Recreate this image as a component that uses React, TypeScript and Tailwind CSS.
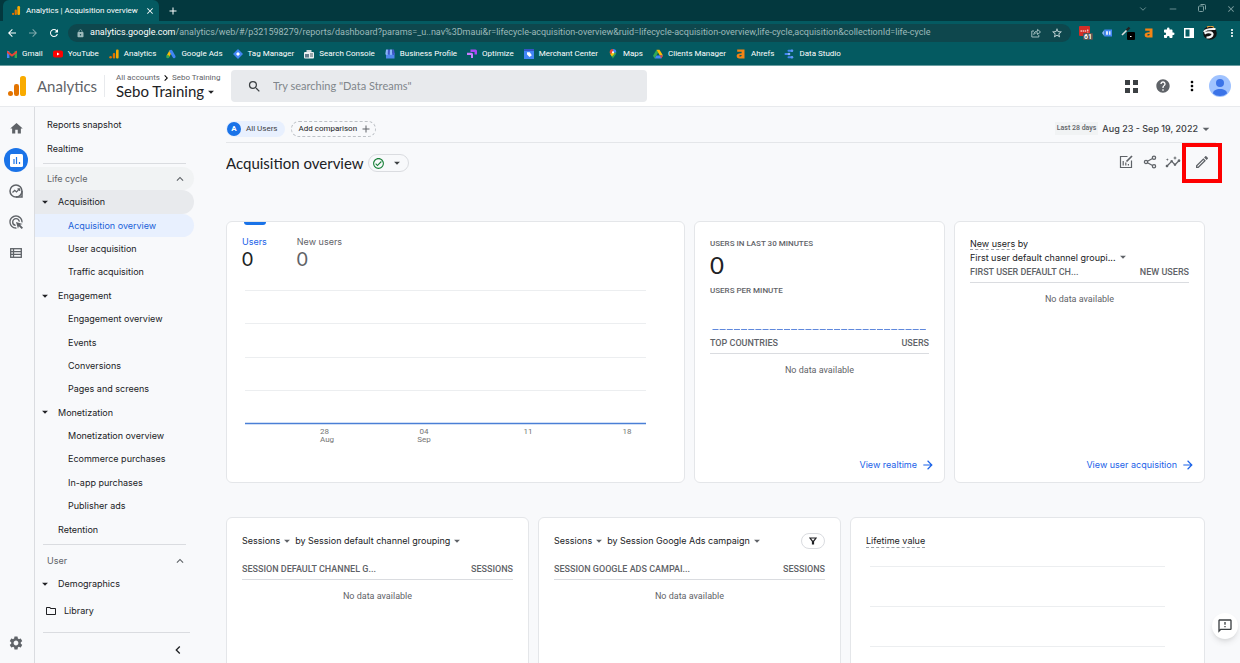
import type { ReactNode } from 'react';
import {
  MdAdsClick,
  MdArrowBack,
  MdArrowDropDown,
  MdArrowForward,
  MdAdd,
  MdChevronLeft,
  MdChevronRight,
  MdClose,
  MdExpandLess,
  MdExtension,
  MdHelp,
  MdHome,
  MdInsights,
  MdLock,
  MdMoreVert,
  MdOutlineCheckCircle,
  MdOutlineFeedback,
  MdOutlineFolder,
  MdOutlineEdit,
  MdRefresh,
  MdSearch,
  MdSettings,
  MdStarBorder,
} from 'react-icons/md';
import { FiChevronDown, FiMinus } from 'react-icons/fi';
import { twMerge } from 'tailwind-merge';
import clsx from 'clsx';
import type { ClassValue } from 'clsx';

const cn = (...inputs: ClassValue[]) => twMerge(clsx(inputs));

const AnalyticsLogo = ({ className }: { className?: string }) => (
  <svg viewBox="0 0 18 20" className={className} aria-hidden="true">
    <rect x="12" y="0" width="6" height="20" rx="2.6" fill="#f9ab00" />
    <rect x="6" y="8" width="5" height="12" rx="2.2" fill="#e37400" />
    <circle cx="2.5" cy="17.5" r="2.5" fill="#e37400" />
  </svg>
);

const AhrefsMark = () => (
  <path
    d="M1.2.5h7.3v9H3A2.4 2.4 0 01.6 7.1c0-1.9 1.3-2.9 5-2.9V2.8H1.2zM5.6 6C3.9 6 3.2 6.2 3.2 6.9c0 .9 2.4.8 2.4-.5z"
    fill="#f58414"
    fillRule="evenodd"
  />
);

const bookmarks: { label: string; icon: ReactNode }[] = [
  {
    label: 'Gmail',
    icon: (
      <>
        <path d="M0 2h2.4v7H0z" fill="#4285f4" />
        <path d="M7.6 2H10v7H7.6z" fill="#34a853" />
        <path d="M0 1.5l5 3.8 5-3.8v2.6L5 7.8 0 4.1z" fill="#ea4335" />
      </>
    ),
  },
  {
    label: 'YouTube',
    icon: (
      <>
        <rect y="1.5" width="10" height="7" rx="1.8" fill="#f00" />
        <path d="M4 3.5v3L6.6 5z" fill="#fff" />
      </>
    ),
  },
  {
    label: 'Analytics',
    icon: (
      <>
        <rect x="7" y="0.5" width="2.6" height="9" rx="1" fill="#f9ab00" />
        <rect x="3.8" y="4" width="2.4" height="5.5" rx="1" fill="#e37400" />
        <circle cx="1.6" cy="8.2" r="1.3" fill="#e37400" />
      </>
    ),
  },
  {
    label: 'Google Ads',
    icon: (
      <>
        <path d="M4.8 2L1.8 7.5" stroke="#fbbc04" strokeWidth="2.8" />
        <path d="M5 2.2l3 5.4" stroke="#4285f4" strokeWidth="3" strokeLinecap="round" />
        <circle cx="1.8" cy="7.7" r="1.6" fill="#34a853" />
      </>
    ),
  },
  {
    label: 'Tag Manager',
    icon: (
      <>
        <path d="M5 0l5 5-5 5-5-5z" fill="#4285f4" />
        <path d="M5 3l2 2-2 2-2-2z" fill="#fff" />
      </>
    ),
  },
  {
    label: 'Search Console',
    icon: (
      <>
        <path d="M2.5 1h5v2h-5z" fill="#cfd8dc" />
        <rect y="3" width="10" height="6.5" rx="1" fill="#eceff1" />
        <path d="M1 5h4v3.5H1z" fill="#607d8b" />
        <path d="M6 5h3M6 7h3" stroke="#455a64" />
      </>
    ),
  },
  {
    label: 'Business Profile',
    icon: (
      <>
        <path d="M1 4h8.5v5.5H1z" fill="#4f86ec" />
        <path d="M1 .5h2v4.2a1.3 1.3 0 01-2.6 0z" fill="#8ab4f8" />
        <path d="M3 .5h2v4.2a1.2 1.2 0 01-2.3 0z" fill="#4257c9" />
        <path d="M5 .5h2.2v4.2a1.2 1.2 0 01-2.4 0z" fill="#8ab4f8" />
        <path d="M7.2.5H9l.8 4.2a1.3 1.3 0 01-2.6 0z" fill="#4257c9" />
      </>
    ),
  },
  {
    label: 'Optimize',
    icon: (
      <>
        <path d="M3.5.5h5A1.5 1.5 0 0110 2v3.5H7.5V3h-4z" fill="#ab47f5" />
        <path d="M0 3.8h4.5A1.5 1.5 0 016 5.3V9H4V6H0z" fill="#c77dff" />
      </>
    ),
  },
  {
    label: 'Merchant Center',
    icon: (
      <>
        <path d="M0 0h10v10H0z" fill="#4285f4" />
        <path d="M0 0h10v2H0z" fill="#3454c5" />
        <path d="M3 3.2h2.8l2 3L5.5 8 3 5.5z" fill="#fff" />
      </>
    ),
  },
  {
    label: 'Maps',
    icon: (
      <>
        <path d="M5 10C4.5 7.5 1.7 6.3 1.7 3.3L5 3.5l3.3-.2C8.3 6.3 5.5 7.5 5 10z" fill="#34a853" />
        <path d="M1.7 3.3A3.3 3.3 0 015 0v3.4L2.4 5.2a4 4 0 01-.7-1.9z" fill="#ea4335" />
        <path d="M5 0a3.3 3.3 0 013.3 3.3L5 4z" fill="#4285f4" />
        <path d="M2.4 5.2L5 3l1.5 1.8-2.6 2.7z" fill="#fbbc04" />
        <circle cx="5" cy="3.3" r="1.1" fill="#fff" />
      </>
    ),
  },
  {
    label: 'Clients Manager',
    icon: (
      <>
        <path d="M3.5.8L0 6.8 1.7 9.4 5.2 3.5z" fill="#34a853" />
        <path d="M3.5.8h3L10 6.6H6.8z" fill="#fbbc04" />
        <path d="M3.4 6.6H10L8.3 9.4H1.7z" fill="#4285f4" />
        <path d="M6.8 6.6H10L8.3 9.4z" fill="#ea4335" />
      </>
    ),
  },
  { label: 'Ahrefs', icon: <AhrefsMark /> },
  {
    label: 'Data Studio',
    icon: (
      <>
        <path d="M4.5 1.8H8M1.5 5H5M4.5 8.2H8" stroke="#4285f4" strokeWidth="2" strokeLinecap="round" />
        <circle cx="8" cy="1.8" r="1.3" fill="#5e97f6" />
        <circle cx="5" cy="5" r="1.3" fill="#8ab4f8" />
        <circle cx="8" cy="8.2" r="1.3" fill="#5e97f6" />
      </>
    ),
  },
];

const BrowserBar = () => (
  <div className="flex-shrink-0 border-b border-[#6a9da1] bg-[#045a61] font-['Roboto',sans-serif] text-white">
    <div className="flex h-[21px] items-stretch bg-[#03383e] pl-[3px]">
      <div className="flex w-[156px] items-center rounded-t-md bg-[#045a61] pr-1 pl-2">
        <AnalyticsLogo className="h-[9px] w-[10px]" />
        <span className="ml-[5px] flex-1 text-[8px] whitespace-nowrap">Analytics | Acquisition overview</span>
        <button aria-label="Close tab">
          <MdClose className="size-[10px]" />
        </button>
      </div>
      <button aria-label="New tab" className="ml-2">
        <MdAdd className="size-3" />
      </button>
      <div className="ml-auto flex items-start gap-5 pt-1 pr-1 text-[#7d9fa1]">
        <button aria-label="Search tabs"><FiChevronDown className="size-[10px]" /></button>
        <button aria-label="Minimize"><FiMinus className="size-[10px]" /></button>
        <button aria-label="Restore">
          <svg viewBox="0 0 8 8" className="size-2" fill="none" stroke="currentColor">
            <rect x="0.5" y="2" width="5" height="5.5" rx="1" />
            <path d="M2.5.5h4a1 1 0 011 1v4" />
          </svg>
        </button>
        <button aria-label="Close window"><MdClose className="size-[10px]" /></button>
      </div>
    </div>

    <div className="flex h-6 items-center pl-[6px]">
      <button aria-label="Back"><MdArrowBack className="size-3" /></button>
      <button aria-label="Forward" className="ml-[9px] text-[#7fa8ab]"><MdArrowForward className="size-3" /></button>
      <button aria-label="Reload" className="ml-[9px]"><MdRefresh className="size-3" /></button>
      <div className="ml-2 flex h-[18px] flex-1 items-center rounded-full bg-[#0e474d] pr-2 pl-2 text-[9px] text-[#9dbabb]">
        <MdLock className="size-[9px]" />
        <label htmlFor="address" className="ml-[5px] text-white">analytics.google.com</label>
        <input
          id="address"
          className="min-w-0 flex-1 bg-transparent outline-none"
          defaultValue="/analytics/web/#/p321598279/reports/dashboard?params=_u..nav%3Dmaui&r=lifecycle-acquisition-overview&ruid=lifecycle-acquisition-overview,life-cycle,acquisition&collectionId=life-cycle"
        />
        <button aria-label="Share this page">
          <svg viewBox="0 0 10 10" className="size-[10px]" fill="none" stroke="currentColor">
            <path d="M3 3H.8v6h7V7" />
            <path d="M2.8 6.5c.2-2.2 1.5-3.3 3.7-3.3V1.4l3 2.6-3 2.5V4.8c-1.6 0-2.7.4-3.7 1.7z" />
          </svg>
        </button>
        <button aria-label="Bookmark" className="ml-[10px] text-[#cfdedf]"><MdStarBorder className="size-3" /></button>
      </div>
      <div className="ml-2 flex items-center gap-[9px] pr-[2px]">
        <button aria-label="Password manager">
          <svg viewBox="0 0 14 14" className="size-[14px]">
            <rect width="11" height="10" rx="1" fill="#d32d27" />
            <path d="M1.5 5h6M8.8 3.5v3" stroke="#fff" strokeDasharray="1.5 .6" />
            <rect x="4" y="7" width="10" height="7" rx="1" fill="#555" />
            <text x="5" y="13" fontSize="7" fontWeight="700" fill="#fff">61</text>
          </svg>
        </button>
        <button aria-label="Tag helper">
          <svg viewBox="0 0 10 10" className="size-[10px]">
            <path d="M0 5l2.5-3.5v7z" fill="#8ab4f8" />
            <path d="M2.5 1.5H10v7H2.5z" fill="#4285f4" />
            <path d="M4 3.3h2v3.4H4zM7 3.3h1.5v3.4H7z" fill="#dce8fd" />
          </svg>
        </button>
        <button aria-label="Color picker">
          <svg viewBox="0 0 14 14" className="size-[14px]">
            <path d="M1 9l5-5" stroke="#ddd" strokeWidth="1.6" />
            <path d="M5.5 4.5l3-3" stroke="#222" strokeWidth="2.4" />
            <rect x="6" y="6" width="8" height="8" rx="1" fill="#000" />
            <path d="M9 10.5h1.5" stroke="#fff" />
          </svg>
        </button>
        <button aria-label="Ahrefs toolbar">
          <svg viewBox="0 0 10 10" className="size-[10px]"><AhrefsMark /></svg>
        </button>
        <button aria-label="Extensions"><MdExtension className="size-3" /></button>
        <button aria-label="Side panel">
          <svg viewBox="0 0 10 10" className="size-[10px]">
            <path d="M0 0h10v10H0zM1.5 1.5v7h4v-7z" fill="#fff" fillRule="evenodd" />
          </svg>
        </button>
        <button aria-label="Profile">
          <svg viewBox="0 0 14 14" className="size-[14px]" fill="none">
            <circle cx="7" cy="7" r="6.8" fill="#111" />
            <path d="M1 6C2 3.5 5 2.5 12.5 3" stroke="#f5f5f5" strokeWidth="2" />
            <path d="M1.5 7.5C5 5.5 10 6 9.5 8.5S6 11.5 3.5 11.5" stroke="#f5f5f5" strokeWidth="2.2" />
            <path d="M4 1.2C6 0 9 0 11 1.5" stroke="#e8a33d" strokeWidth="1.2" />
          </svg>
        </button>
        <button aria-label="Browser menu"><MdMoreVert className="size-3" /></button>
      </div>
    </div>

    <nav className="flex h-5 items-center gap-[10px] overflow-hidden pb-[3px] pl-[7px] text-[8px] whitespace-nowrap">
      {bookmarks.map((b) => (
        <a key={b.label} href="#" className="flex items-center gap-[5px]">
          <svg viewBox="0 0 10 10" className="size-[10px]" fill="none" aria-hidden="true">{b.icon}</svg>
          {b.label}
        </a>
      ))}
    </nav>
  </div>
);

const AppHeader = () => (
  <header className="flex h-[41px] flex-shrink-0 items-center border-b border-[#e8eaed] bg-white pr-[9px] pl-2 text-[#202124]">
    <AnalyticsLogo className="h-5 w-[18px]" />
    <span className="ml-[11px] w-[57px] font-['Lato',sans-serif] text-[15px] text-[#5f6368]">Analytics</span>
    <div className="mr-[11px] ml-[10px] h-[22px] w-px bg-[#e8eaed]" />
    <div className="w-[115px] whitespace-nowrap">
      <div className="flex h-[11px] items-center font-['Roboto',sans-serif] text-[8px] text-[#5f6368]">
        All accounts <MdChevronRight className="size-3 text-black" /> Sebo Training
      </div>
      <button className="flex h-[17px] items-center font-['Lato',sans-serif] text-[15px]">
        Sebo Training <MdArrowDropDown className="size-[14px]" />
      </button>
    </div>
    <label className="flex h-8 w-full max-w-[416px] items-center rounded bg-[#e8eaed] pl-4">
      <MdSearch className="size-[15px] text-[#3c4043]" />
      <input
        type="search"
        aria-label="Search"
        placeholder={'Try searching "Data Streams"'}
        className="ml-[11px] flex-1 bg-transparent font-['Lato',sans-serif] text-[11px] outline-none placeholder:text-[#80868b]"
      />
    </label>
    <div className="ml-auto flex items-center text-[#5f6368]">
      <button aria-label="Apps" className="grid grid-cols-2 gap-[3px]">
        {[0, 1, 2, 3].map((i) => (
          <span key={i} className="size-[5px] bg-[#3c4043]" />
        ))}
      </button>
      <button aria-label="Help" className="ml-[17px]"><MdHelp className="size-4" /></button>
      <button aria-label="More" className="ml-[13px] text-black"><MdMoreVert className="size-4" /></button>
      <button aria-label="Account" className="ml-[9px]">
        <svg viewBox="0 0 22 22" className="size-[22px]">
          <circle cx="11" cy="11" r="11" fill="#a0c3ff" />
          <circle cx="11" cy="8" r="4" fill="#3b73e8" />
          <path d="M4 18.5c0-3 3-4.5 7-4.5s7 1.5 7 4.5a11 11 0 01-14 0z" fill="#3b73e8" />
        </svg>
      </button>
    </div>
  </header>
);

const Rail = () => (
  <nav aria-label="Sections" className="flex w-[35px] flex-shrink-0 flex-col items-center border-r border-[#dadce0] pt-[14px] pr-[2px] pb-3 text-[#5f6368]">
    <a href="#" aria-label="Home"><MdHome className="size-[15px]" /></a>
    <a href="#" aria-label="Reports" className="mt-3 flex size-6 items-center justify-center rounded-full bg-[#1a73e8]">
      <svg viewBox="0 0 13 13" className="size-[13px]">
        <rect width="13" height="13" rx="1.5" fill="#fff" />
        <path d="M4 5v5M6.5 3v7M9.5 8v2" stroke="#1a73e8" strokeWidth="1.2" />
      </svg>
    </a>
    <a href="#" aria-label="Explore" className="mt-3">
      <svg viewBox="0 0 14 14" className="size-[14px]" fill="none" stroke="currentColor" strokeWidth="1.5">
        <path d="M13 7v6H7" />
        <circle cx="7" cy="7" r="6" />
        <path d="M3.5 8.5l2.2-2.2 1.8 1.6 3-3M8.5 4.8h2.2V7" strokeWidth="1.2" />
      </svg>
    </a>
    <a href="#" aria-label="Advertising" className="mt-4"><MdAdsClick className="size-4" /></a>
    <a href="#" aria-label="Configure" className="mt-[18px]">
      <svg viewBox="0 0 12 10" className="h-[10px] w-3" fill="none" stroke="currentColor" strokeWidth="1.3">
        <rect x="0.7" y="0.7" width="10.6" height="8.6" />
        <path d="M.7 3.6h10.6M.7 6.4h10.6M3.5.7v8.6" />
      </svg>
    </a>
    <a href="#" aria-label="Admin" className="mt-auto"><MdSettings className="size-4" /></a>
  </nav>
);

interface NavItem {
  label: string;
  level: 1 | 2;
  hasChildren?: boolean;
  isOpen?: boolean;
  isActive?: boolean;
}

const lifeCycle: NavItem[] = [
  { label: 'Acquisition', level: 1, hasChildren: true, isOpen: true },
  { label: 'Acquisition overview', level: 2, isActive: true },
  { label: 'User acquisition', level: 2 },
  { label: 'Traffic acquisition', level: 2 },
  { label: 'Engagement', level: 1, hasChildren: true },
  { label: 'Engagement overview', level: 2 },
  { label: 'Events', level: 2 },
  { label: 'Conversions', level: 2 },
  { label: 'Pages and screens', level: 2 },
  { label: 'Monetization', level: 1, hasChildren: true },
  { label: 'Monetization overview', level: 2 },
  { label: 'Ecommerce purchases', level: 2 },
  { label: 'In-app purchases', level: 2 },
  { label: 'Publisher ads', level: 2 },
  { label: 'Retention', level: 1 },
];

const NavRow = ({ item }: { item: NavItem }) => (
  <a
    href="#"
    className={cn(
      'flex min-h-[22px] flex-1 items-center rounded-r-full',
      item.level === 1 ? 'pl-[3px]' : 'pl-[33px]',
      item.isOpen && 'bg-[#e8eaed]',
      item.isActive && 'bg-[#e8f0fe] text-[#1a5fd8]'
    )}
  >
    {item.level === 1 && (
      <span className="mr-[6px] w-[14px]">{item.hasChildren && <MdArrowDropDown className="size-[14px]" />}</span>
    )}
    {item.label}
  </a>
);

const SectionButton = ({ label, shaded }: { label: string; shaded?: boolean }) => (
  <button
    className={cn(
      'flex min-h-[22px] flex-1 items-center justify-between rounded-r-full pr-[7px] pl-3 text-[#5f6368]',
      shaded && 'bg-[#f1f3f4]'
    )}
  >
    {label}
    <MdExpandLess className="size-[14px]" />
  </button>
);

const Sidebar = () => (
  <nav aria-label="Reports" className="flex w-[159px] flex-shrink-0 flex-col pt-[6px] text-[9px] text-[#202124]">
    <a href="#" className="flex h-6 items-center pl-3">Reports snapshot</a>
    <a href="#" className="flex h-6 items-center pl-3">Realtime</a>
    <hr className="mt-[2px] mr-2 ml-2 border-[#dadce0]" />
    <div className="mt-[3px] flex flex-1 flex-col">
      <SectionButton label="Life cycle" shaded />
      {lifeCycle.map((item) => (
        <NavRow key={item.label} item={item} />
      ))}
    </div>
    <hr className="mt-[3px] mr-2 ml-2 border-[#dadce0]" />
    <div className="mt-1 flex h-[46px] flex-col">
      <SectionButton label="User" />
      <NavRow item={{ label: 'Demographics', level: 1, hasChildren: true }} />
    </div>
    <a href="#" className="mt-1 flex h-6 items-center gap-[7px] pl-[10px]">
      <MdOutlineFolder className="size-3" />
      Library
    </a>
    <hr className="mt-[9px] mr-1 ml-2 border-[#dadce0]" />
    <button aria-label="Collapse" className="flex h-[30px] items-center justify-end pr-2 pt-1">
      <MdChevronLeft className="size-4" />
    </button>
  </nav>
);

const Card = ({ children, className }: { children: ReactNode; className?: string }) => (
  <section className={cn('flex flex-col rounded-md border border-[#e4e6e9] bg-white px-[15px]', className)}>
    {children}
  </section>
);

const EmptyTable = ({ dimension, metric }: { dimension: string; metric: string }) => (
  <table className="w-full font-['Roboto',sans-serif] text-[9px] text-[#5f6368]">
    <thead>
      <tr className="h-[18px] border-b border-[#dadce0]">
        <th className="text-left align-middle font-medium">{dimension}</th>
        <th className="text-right align-middle font-medium">{metric}</th>
      </tr>
    </thead>
    <tbody>
      <tr className="h-[34px]">
        <td colSpan={2} className="text-center">No data available</td>
      </tr>
    </tbody>
  </table>
);

const PickerButton = ({ label }: { label: string }) => (
  <button className="flex items-center">
    {label}
    <MdArrowDropDown className="size-[14px] text-[#5f6368]" />
  </button>
);

const ViewLink = ({ label }: { label: string }) => (
  <a href="#" className="-mr-[6px] mt-auto mb-[10px] flex items-center justify-end gap-1 text-[9px] text-[#1a62e8]">
    {label}
    <MdArrowForward className="size-[14px]" />
  </a>
);

const UsersChart = () => (
  <div className="mt-5 mr-[23px]">
    <svg viewBox="0 0 404 156" className="w-full font-['Roboto',sans-serif]" role="img" aria-label="Users per day">
      {[0, 33, 67, 100].map((y) => (
        <path key={y} d={`M3 ${y + 0.5}h401`} stroke="#eceef0" />
      ))}
      <path d="M3 133.5h401" stroke="#4a7fd6" strokeWidth="1.5" />
      <g fontSize="8" fill="#757575">
        <text x="78" y="144">28</text>
        <text x="78" y="152">Aug</text>
        <text x="182" y="144" textAnchor="middle">04</text>
        <text x="182" y="152" textAnchor="middle">Sep</text>
        <text x="286" y="144" textAnchor="middle">11</text>
        <text x="385" y="144" textAnchor="middle">18</text>
      </g>
    </svg>
  </div>
);

const Toolbar = () => (
  <div className="flex items-center text-[#5f6368]">
    <div className="flex items-center pb-[3px]">
      <button aria-label="Customize chart">
        <svg viewBox="0 0 14 14" className="size-[14px]" fill="none" stroke="currentColor" strokeWidth="1.2">
          <path d="M8.5 1.5h-7v11h11v-7" />
          <path d="M4.2 6v4.5M6.8 7.5v3M9.4 9v1.5" />
          <path d="M7.5 6.5L13 1" strokeWidth="1.7" />
        </svg>
      </button>
      <button aria-label="Share report" className="ml-[10px]">
        <svg viewBox="0 0 14 14" className="size-[14px]" fill="none" stroke="currentColor" strokeWidth="1.3">
          <circle cx="11" cy="2.7" r="1.6" />
          <circle cx="3" cy="7" r="1.6" />
          <circle cx="11" cy="11.3" r="1.6" />
          <path d="M4.5 6.2l5-2.7M4.5 7.8l5 2.7" />
        </svg>
      </button>
      <button aria-label="Insights" className="ml-2"><MdInsights className="size-4" /></button>
    </div>
    <button aria-label="Customize report" className="ml-px flex h-10 w-10 items-center justify-center border-4 border-[#fe0000] pb-[3px]">
      <MdOutlineEdit className="size-4" />
    </button>
  </div>
);

const Report = () => (
  <main className="ml-8 min-w-0 flex-1 overflow-hidden text-[#202124]">
    <div className="mr-6 flex h-9 items-center border-b border-[#e4e6e9] pt-2 font-['Roboto',sans-serif] text-[8px]">
      <button className="flex h-4 items-center rounded-full bg-[#e8f0fe] pr-[7px] text-[#3c4043]">
        <span className="mr-[5px] ml-px flex size-[14px] items-center justify-center rounded-full bg-[#1a73e8] font-bold text-white">A</span>
        All Users
      </button>
      <button className="ml-[6px] flex h-4 items-center gap-[3px] rounded-full border border-dashed border-[#bdc1c6] pr-[3px] pl-[7px]">
        Add comparison
        <MdAdd className="size-3 text-[#5f6368]" />
      </button>
      <span className="mr-1 ml-auto bg-[#f1f3f4] px-[2px] py-px text-[7px] font-medium text-[#5f6368]">Last 28 days</span>
      <button className="mr-[2px] flex items-center pt-px font-['Inter',sans-serif] text-[9px] font-medium text-[#3c4043]">
        Aug 23 - Sep 19, 2022
        <MdArrowDropDown className="size-4 text-[#5f6368]" />
      </button>
    </div>

    <div className="flex items-center pr-[18px]">
      <h1 className="font-['Lato',sans-serif] text-[15px]">Acquisition overview</h1>
      <button aria-label="Report status" className="mr-auto ml-1 flex h-[18px] items-center gap-[5px] rounded-full border border-[#dadce0] pr-1 pl-[3px]">
        <MdOutlineCheckCircle className="size-[13px] text-[#188038]" />
        <MdArrowDropDown className="size-[14px] text-[#3c4043]" />
      </button>
      <Toolbar />
    </div>

    <div className="mt-[38px] mr-[35px] grid grid-cols-[459fr_251fr_251fr] gap-[9px]">
      <Card className="min-h-[262px]">
        <div className="ml-[2px] h-[3px] w-[22px] rounded-b bg-[#1a73e8]" />
        <div className="mt-[11px] flex gap-[30px]">
          <button className="text-left">
            <div className="text-[9px] leading-3 text-[#1a62e8]">Users</div>
            <div className="font-['Lato',sans-serif] text-[19px] leading-[22px]">0</div>
          </button>
          <button className="text-left text-[#5f6368]">
            <div className="text-[9px] leading-3">New users</div>
            <div className="font-['Lato',sans-serif] text-[19px] leading-[22px]">0</div>
          </button>
        </div>
        <UsersChart />
      </Card>

      <Card>
        <div className="mt-4 font-['Roboto',sans-serif] text-[8px] leading-3 font-medium text-[#5f6368]">USERS IN LAST 30 MINUTES</div>
        <div className="mt-px font-['Lato',sans-serif] text-[24px] leading-7">0</div>
        <div className="mt-[6px] font-['Roboto',sans-serif] text-[8px] leading-3 font-medium text-[#5f6368]">USERS PER MINUTE</div>
        <svg viewBox="0 0 218 2" className="mt-8 mb-1 w-full" aria-hidden="true">
          <path d="M2 .5h214" stroke="#5f88dc" strokeDasharray="6 1.15" />
        </svg>
        <EmptyTable dimension="TOP COUNTRIES" metric="USERS" />
        <ViewLink label="View realtime" />
      </Card>

      <Card>
        <div className="mt-[15px] text-[9px] leading-[13px]">
          <span className="border-b border-dashed border-[#9aa0a6]">New users</span> by
          <PickerButton label="First user default channel groupi..." />
        </div>
        <EmptyTable dimension="FIRST USER DEFAULT CH..." metric="NEW USERS" />
        <ViewLink label="View user acquisition" />
      </Card>
    </div>

    <div className="mt-[34px] mr-[35px] grid grid-cols-[303fr_303fr_355fr] gap-[9px]">
      <Card className="min-h-[262px]">
        <div className="mt-3 mb-[9px] flex h-[22px] items-center gap-px text-[9px]">
          <PickerButton label="Sessions" />
          <PickerButton label="by Session default channel grouping" />
        </div>
        <EmptyTable dimension="SESSION DEFAULT CHANNEL G..." metric="SESSIONS" />
      </Card>

      <Card>
        <div className="mt-3 mb-[9px] flex h-[22px] items-center gap-px text-[9px]">
          <PickerButton label="Sessions" />
          <PickerButton label="by Session Google Ads campaign" />
          <button aria-label="Filter" className="ml-auto flex h-4 w-6 items-center justify-center rounded-full border border-[#dadce0]">
            <svg viewBox="0 0 8 8" className="size-2" fill="none" stroke="currentColor" strokeWidth="1.2">
              <path d="M1 1h6L4.5 4.3V7h-1V4.3z" />
            </svg>
          </button>
        </div>
        <EmptyTable dimension="SESSION GOOGLE ADS CAMPAI..." metric="SESSIONS" />
      </Card>

      <Card>
        <div className="mt-3 flex h-[22px] items-center text-[9px]">
          <span className="border-b border-dashed border-[#9aa0a6]">Lifetime value</span>
        </div>
        <div className="mt-[14px] mr-6 ml-1">
          {[0, 1, 2, 3].map((i) => (
            <div key={i} className="h-10 border-t border-[#eceef0]" />
          ))}
        </div>
      </Card>
    </div>
  </main>
);

export default function App() {
  return (
    <div className="relative flex h-screen flex-col overflow-hidden bg-[#f8f9fb] font-['Inter',sans-serif]">
      <BrowserBar />
      <AppHeader />
      <div className="flex min-h-0 flex-1">
        <Rail />
        <Sidebar />
        <Report />
      </div>
      <button
        aria-label="Send feedback"
        className="absolute right-[2px] bottom-6 flex size-[26px] items-center justify-center rounded-full bg-white text-[#3c4043] shadow-md"
      >
        <MdOutlineFeedback className="size-4" />
      </button>
    </div>
  );
}
